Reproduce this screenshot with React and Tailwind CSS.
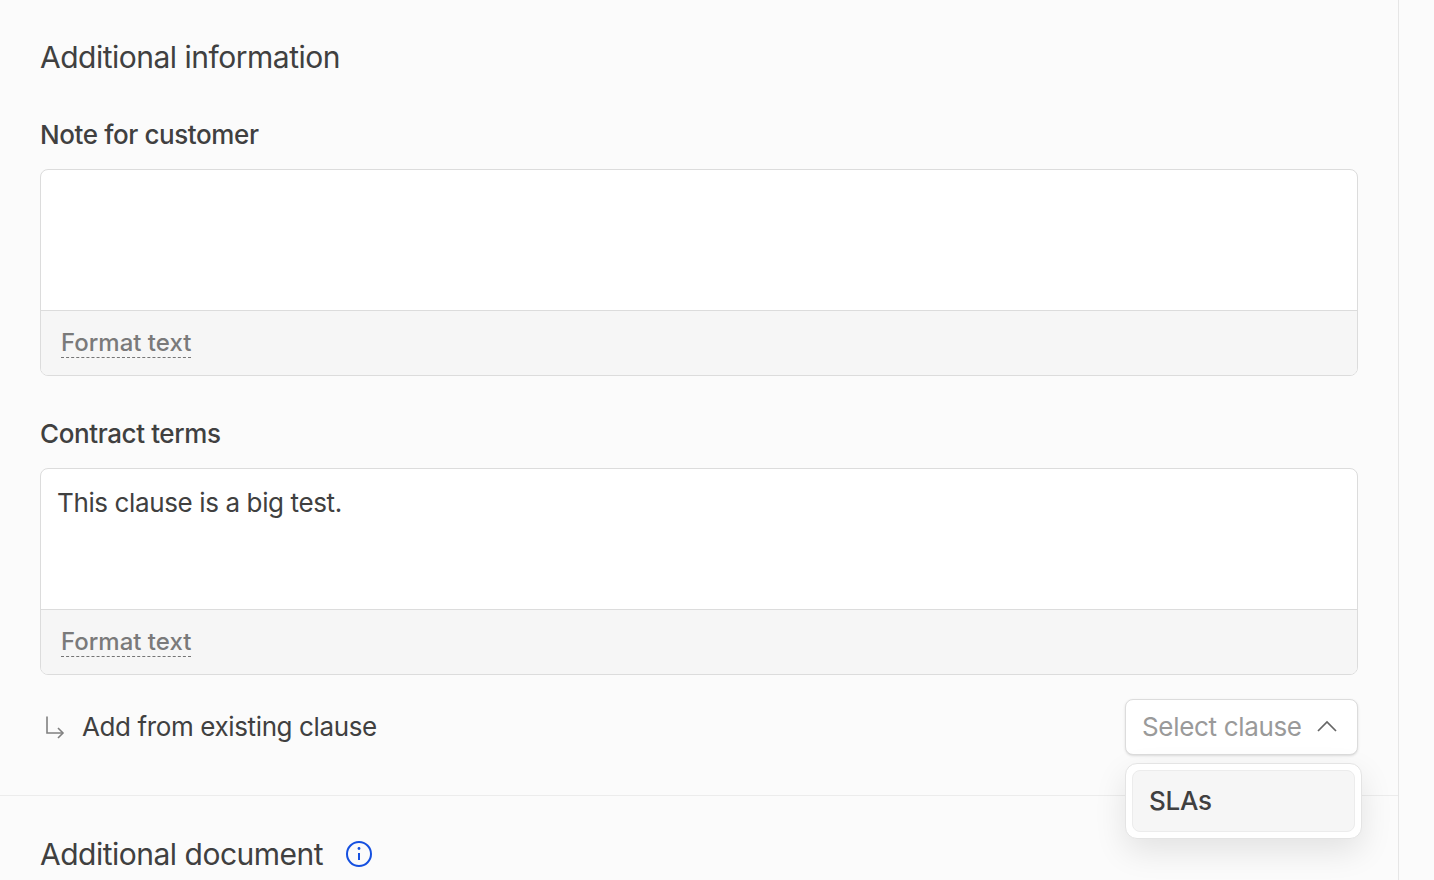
import React from "react";

function Editor({ value }) {
  return (
    <div className="border border-[#dcdcdc] rounded-[8px] overflow-hidden bg-white">
      <div className="h-[140px] px-4 pt-[17px] text-[26px] leading-[34px] tracking-[-0.38px] text-[#404040]">{value}</div>
      <div className="h-[65px] border-t border-[#dcdcdc] bg-[#f6f6f6] pl-5 pt-[18px]">
        <span className="inline-block text-[24px] leading-[28px] font-medium text-[#7a7a7a] border-b border-dashed border-[#757575]">Format text</span>
      </div>
    </div>
  );
}

export default function App() {
  return (
    <div className="h-[880px] overflow-hidden bg-[#fbfbfb] font-['Inter',sans-serif] antialiased">
      <div className="w-[1399px] h-full border-r border-[#e6e6e6]">
        <div className="px-10 pt-[38px] pb-10 border-b border-[#ececec]">
          <h2 className="text-[30px] leading-[38px] tracking-[-0.5px] text-[#404040]">Additional information</h2>

          <label className="block mt-[42px] mb-[17px] text-[26px] leading-[34px] tracking-[-0.4px] font-medium text-[#404040]">Note for customer</label>
          <Editor />

          <label className="block mt-[41px] mb-[17px] text-[26px] leading-[34px] tracking-[-0.4px] font-medium text-[#404040]">Contract terms</label>
          <Editor value="This clause is a big test." />

          <div className="flex items-center justify-between mt-6">
            <div className="flex items-center gap-[15px] pl-[2px]">
              <svg width="25" height="25" viewBox="0 0 25 25" fill="none" stroke="#808080" strokeWidth="1.6" className="-mt-[2px]">
                <path d="M5 2.5V19H21" />
                <path d="M16 14L21 19L16 24" />
              </svg>
              <span className="pb-[2px] text-[26px] tracking-[-0.38px] text-[#404040]">Add from existing clause</span>
            </div>
            <div className="relative">
              <button className="flex items-center w-[233px] h-[56px] pl-4 pr-5 justify-between bg-white border border-[#dcdcdc] rounded-[8px] shadow-sm">
                <span className="pb-[2px] text-[26px] tracking-[-0.33px] text-[#9a9a9a]">Select clause</span>
                <svg width="20" height="12" viewBox="0 0 20 12" fill="none" stroke="#666666" strokeWidth="1.7" className="-mt-[2px]">
                  <path d="M1 11L10 2L19 11" />
                </svg>
              </button>
              <div className="absolute left-0 top-[64px] z-10 w-[237px] h-[76px] p-[6px] bg-white border border-[#e4e4e4] rounded-[12px] shadow-[0_12px_32px_rgba(0,0,0,0.1)]">
                <div className="h-[62px] flex items-center pl-4 pb-[2px] bg-[#f6f6f6] border border-[#ececec] rounded-[8px] text-[26px] tracking-[-0.3px] font-medium text-[#404040]">SLAs</div>
              </div>
            </div>
          </div>
        </div>

        <div className="px-10 pt-[39px] flex items-center gap-[21px]">
          <h2 className="text-[30px] leading-[38px] tracking-[-0.5px] text-[#404040]">Additional document</h2>
          <svg width="30" height="30" viewBox="0 0 30 30" fill="none" stroke="#1550e0" strokeWidth="2">
            <circle cx="15" cy="15" r="12" />
            <path d="M15 14V21" />
            <circle cx="15" cy="9.5" r="1.4" fill="#1550e0" stroke="none" />
          </svg>
        </div>
      </div>
    </div>
  );
}
